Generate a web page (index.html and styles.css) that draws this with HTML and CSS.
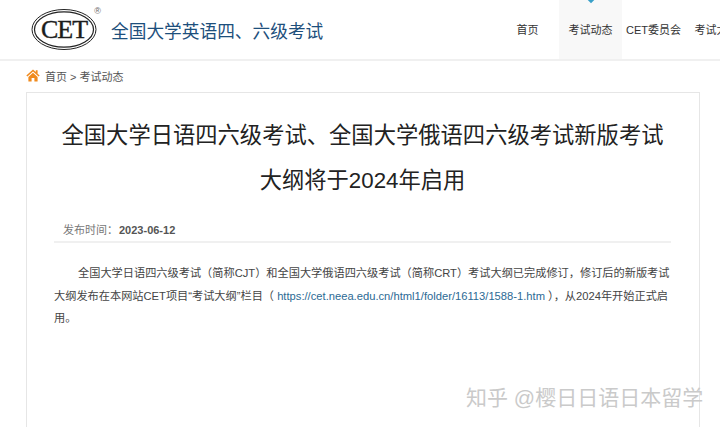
FILE: index.html
```html
<!DOCTYPE html>
<html lang="zh-CN">
<head>
    <meta charset="UTF-8">
    <meta name="viewport" content="width=device-width, initial-scale=1.0">
    <title>考试动态</title>
    <link rel="stylesheet" href="styles.css">
</head>
<body>
    <header class="site-header">
        <div class="brand">
            <div class="logo">
                <svg class="logo-ring" width="66" height="43" viewBox="0 0 66 43">
                    <ellipse cx="33" cy="21.5" rx="32" ry="20" fill="none" stroke="#222" stroke-width="1"/>
                    <ellipse cx="33" cy="21.5" rx="29.5" ry="17.6" fill="none" stroke="#222" stroke-width="1.2"/>
                </svg>
                <span class="logo-text">CET</span>
                <span class="logo-mark">®</span>
            </div>
            <span class="brand-name">全国大学英语四、六级考试</span>
        </div>
        <nav class="main-nav">
            <a class="nav-item">首页</a>
            <a class="nav-item active">考试动态</a>
            <a class="nav-item">CET委员会</a>
            <a class="nav-item">考试大纲</a>
        </nav>
    </header>

    <div class="crumbs">
        <svg class="home-icon" width="14" height="13" viewBox="0 0 14 13">
            <path d="M7 0.5 L0.3 6.6 L1.4 7.6 L7 2.6 L12.6 7.6 L13.7 6.6 L11.6 4.7 V1.2 H9.8 V3 Z" fill="#f08a1d"/>
            <path d="M2.4 8 L7 3.8 L11.6 8 V12.6 H8.4 V9 H5.6 V12.6 H2.4 Z" fill="#f08a1d"/>
        </svg>
        <span>首页 &gt; 考试动态</span>
    </div>

    <main class="card">
        <h1 class="article-title">全国大学日语四六级考试、全国大学俄语四六级考试新版考试大纲将于2024年启用</h1>
        <div class="meta">发布时间：<b>2023-06-12</b></div>
        <p class="article-body">全国大学日语四六级考试（简称CJT）和全国大学俄语四六级考试（简称CRT）考试大纲已完成修订，修订后的新版考试大纲发布在本网站CET项目“考试大纲”栏目（ <a class="link">https://cet.neea.edu.cn/html1/folder/16113/1588-1.htm</a> ），从2024年开始正式启用。</p>
    </main>

    <div class="watermark">知乎 @樱日日语日本留学</div>
</body>
</html>
```

FILE: styles.css
```css
html, body {
    height: 100%;
}

body {
    margin: 0;
    overflow: hidden;
    position: relative;
    background: #ffffff;
    color: #333333;
    font-family: "Liberation Sans", "Noto Sans CJK SC", sans-serif;
}

/* Header */
.site-header {
    display: flex;
    justify-content: space-between;
    height: 59px;
    padding-left: 31px;
    border-bottom: 2px solid #f0f0f0;
}

.brand {
    display: flex;
    align-items: center;
    gap: 14px;
}

.logo {
    position: relative;
    width: 66px;
    height: 43px;
    margin-top: -1px;
}

.logo-ring {
    display: block;
}

.logo-text {
    position: absolute;
    top: 0;
    left: 0;
    width: 66px;
    text-align: center;
    font-family: "Liberation Serif", serif;
    font-size: 26px;
    line-height: 43px;
    letter-spacing: -1px;
    color: #1c1c1c;
    -webkit-text-stroke: 0.4px #1c1c1c;
}

.logo-mark {
    position: absolute;
    top: -3px;
    right: -4px;
    font-size: 9px;
    line-height: 12px;
    color: #666666;
}

.brand-name {
    font-size: 17.7px;
    color: #1d4f7c;
}

.main-nav {
    display: flex;
    flex: 0 0 252px;
    width: 252px;
    margin-right: -28px;
}

.nav-item {
    position: relative;
    flex: 0 0 63px;
    text-align: center;
    font-size: 11px;
    line-height: 61px;
    white-space: nowrap;
    color: #333333;
}

.nav-item.active {
    background: #f8f8f8;
}

.nav-item.active::before {
    content: "";
    position: absolute;
    top: -4px;
    left: 29px;
    width: 6px;
    height: 6px;
    background: #3aa0c8;
    transform: rotate(45deg);
}

/* Breadcrumb */
.crumbs {
    display: flex;
    align-items: center;
    gap: 5px;
    height: 31px;
    padding-left: 26px;
    padding-bottom: 1px;
    box-sizing: border-box;
    font-size: 11px;
    color: #555555;
}

.home-icon {
    margin-top: -2px;
}

/* Article */
.card {
    box-sizing: border-box;
    height: 335px;
    margin: 0 20px 0 26px;
    padding: 0 28px 0 27px;
    border: 1px solid #e6e6e6;
    border-bottom: none;
}

.article-title {
    margin: 20px 0 0;
    font-size: 22.3px;
    font-weight: 400;
    line-height: 45px;
    text-align: center;
    color: #222222;
}

.meta {
    margin-top: 18px;
    padding: 0 0 2px 9px;
    border-bottom: 2px solid #f0f0f0;
    font-size: 11px;
    line-height: 18px;
    color: #777777;
}

.meta b {
    margin-left: 1px;
    color: #555555;
}

.article-body {
    margin: 19px 0 0;
    font-size: 11.2px;
    line-height: 22.6px;
    text-indent: 24px;
    color: #444444;
}

.link {
    color: #2c6a94;
}

.watermark {
    position: absolute;
    top: 385px;
    left: 466px;
    font-size: 21px;
    line-height: 26px;
    white-space: nowrap;
    color: #cacaca;
}
```
